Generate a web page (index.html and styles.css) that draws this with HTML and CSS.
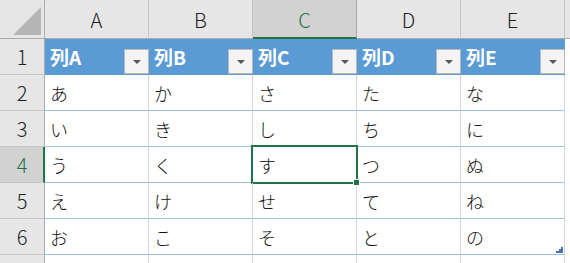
FILE: index.html
```html
<!DOCTYPE html>
<html lang="ja">
<head>
<meta charset="utf-8">
<link rel="stylesheet" href="styles.css">
</head>
<body>
<div class="sheet">
  <div class="corner"><svg width="44" height="38" viewBox="0 0 44 38"><polygon points="13,35 41,35 41,7" fill="#b5b5b5"/></svg></div>
  <div class="ch">A</div>
  <div class="ch">B</div>
  <div class="ch ch-sel">C</div>
  <div class="ch">D</div>
  <div class="ch">E</div>
  <div class="ch ch-rest"></div>

  <div class="rh">1</div>
  <div class="th">列A<span class="filter"></span></div>
  <div class="th">列B<span class="filter"></span></div>
  <div class="th">列C<span class="filter"></span></div>
  <div class="th">列D<span class="filter"></span></div>
  <div class="th">列E<span class="filter"></span></div>
  <div class="rest"></div>

  <div class="rh">2</div>
  <div class="td">あ</div><div class="td">か</div><div class="td">さ</div><div class="td">た</div><div class="td">な</div><div class="rest"></div>
  <div class="rh">3</div>
  <div class="td">い</div><div class="td">き</div><div class="td">し</div><div class="td">ち</div><div class="td">に</div><div class="rest"></div>
  <div class="rh rh-sel">4</div>
  <div class="td">う</div><div class="td">く</div><div class="td td-sel">す<span class="handle"></span></div><div class="td">つ</div><div class="td">ぬ</div><div class="rest"></div>
  <div class="rh">5</div>
  <div class="td">え</div><div class="td">け</div><div class="td">せ</div><div class="td">て</div><div class="td">ね</div><div class="rest"></div>
  <div class="rh">6</div>
  <div class="td">お</div><div class="td">こ</div><div class="td">そ</div><div class="td">と</div><div class="td td-last">の<svg class="resize" width="7" height="6" viewBox="0 0 7 6"><polygon points="0,6 7,6 7,0 5,0 5,2 3,2 3,4 0,4" fill="#4a6fc0"/></svg></div><div class="rest"></div>
  <div class="rh rh-end"></div>
  <div class="te"></div><div class="te"></div><div class="te"></div><div class="te"></div><div class="te"></div><div class="rest"></div>
</div>
</body>
</html>
```

FILE: styles.css
```css
* { box-sizing: border-box; }
html, body { margin: 0; padding: 0; background: #fff; }
body { width: 570px; height: 263px; overflow: hidden; font-family: "Noto Sans CJK JP", "Noto Sans", sans-serif; }

.sheet {
  display: grid;
  grid-template-columns: 45px repeat(5, 104px) 5px;
  grid-template-rows: 39px repeat(6, 36px) 20px;
}

.corner {
  background: #e6e6e6;
  border-right: 1px solid #ababab;
  border-bottom: 1px solid #ababab;
}
.corner svg { display: block; }

.ch {
  background: #e6e6e6;
  border-right: 1px solid #c6c6c6;
  border-bottom: 1px solid #ababab;
  display: flex;
  align-items: center;
  justify-content: center;
  font-size: 20px;
  font-weight: 300;
  color: #222;
  padding-top: 1px;
}
.ch-sel {
  background: #d2d2d2;
  color: #217346;
  border-bottom: 2px solid #217346;
  border-right-color: #ababab;
  padding-top: 2px;
}
.ch-rest { border-right: none; }

.rh {
  background: #e6e6e6;
  border-right: 1px solid #ababab;
  border-bottom: 1px solid #c6c6c6;
  display: flex;
  align-items: center;
  justify-content: center;
  font-size: 20px;
  font-weight: 300;
  color: #222;
}
.rh-sel {
  background: #d2d2d2;
  color: #217346;
  border-right: 2px solid #217346;
  padding-left: 1px;
}
.rh-end { border-bottom: none; }

.th {
  background: #5b9bd5;
  color: #fff;
  font-weight: bold;
  font-size: 19px;
  display: flex;
  align-items: center;
  padding-left: 5px;
  position: relative;
  border-bottom: 1px solid #5b9bd5;
}
.filter {
  position: absolute;
  right: 0;
  top: 10px;
  width: 25px;
  height: 25px;
  background: #f4f4f4;
  border: 1px solid #b9b9b9;
}
.filter::after {
  content: "";
  position: absolute;
  left: 8px;
  top: 10px;
  border-left: 4px solid transparent;
  border-right: 4px solid transparent;
  border-top: 4px solid #5a5a5a;
}

.td {
  border-right: 1px solid #d4d4d4;
  border-bottom: 1px solid #9bc2e6;
  display: flex;
  align-items: center;
  padding-left: 5px;
  font-size: 18px;
  font-weight: 300;
  color: #111;
  position: relative;
}
.td-sel::before {
  content: "";
  position: absolute;
  left: -2px;
  top: -2px;
  right: -2px;
  bottom: -2px;
  border: 2px solid #217346;
}
.handle {
  position: absolute;
  right: -4px;
  bottom: -4px;
  width: 7px;
  height: 7px;
  background: #217346;
  border: 1px solid #fff;
  z-index: 2;
}
.resize { position: absolute; right: 1px; bottom: 1px; }

.te { border-right: 1px solid #d4d4d4; }
.rest { }
```
